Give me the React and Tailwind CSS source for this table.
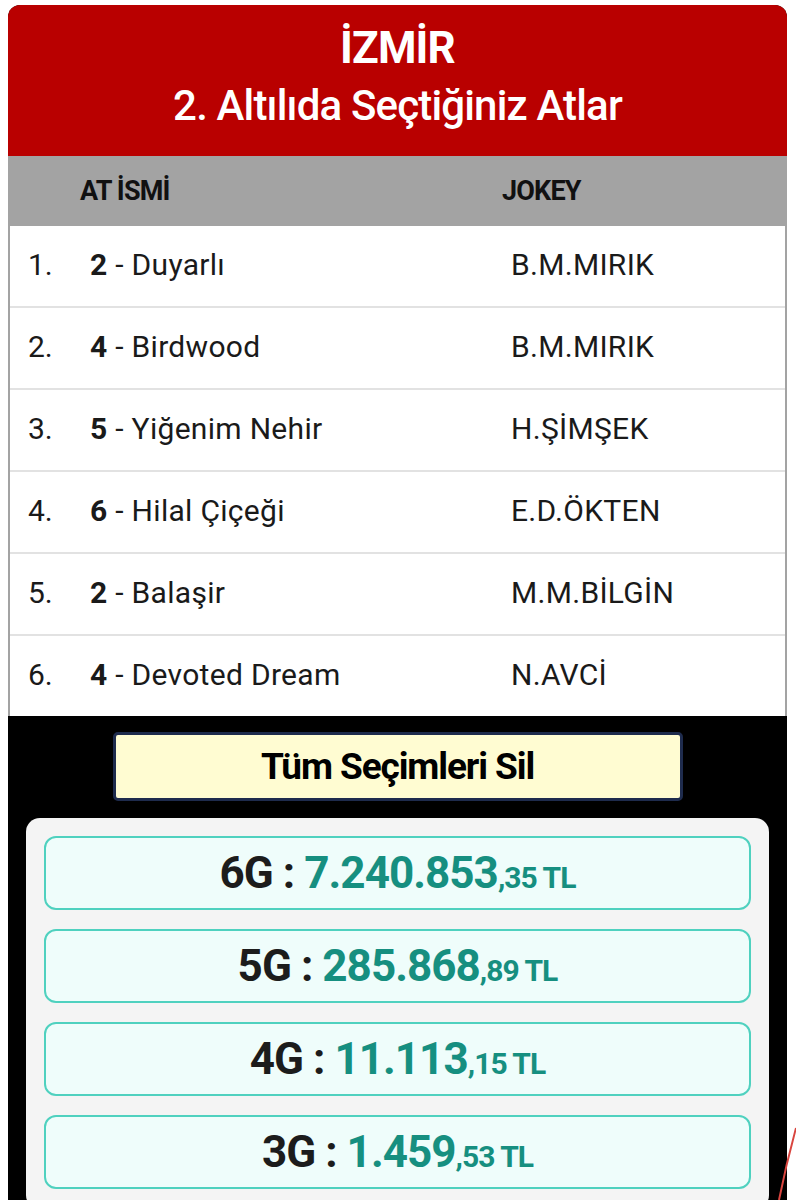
import React from "react";

const rows = [
  { n: "1.", num: "2", name: "Duyarlı", jockey: "B.M.MIRIK" },
  { n: "2.", num: "4", name: "Birdwood", jockey: "B.M.MIRIK" },
  { n: "3.", num: "5", name: "Yiğenim Nehir", jockey: "H.ŞİMŞEK" },
  { n: "4.", num: "6", name: "Hilal Çiçeği", jockey: "E.D.ÖKTEN" },
  { n: "5.", num: "2", name: "Balaşir", jockey: "M.M.BİLGİN" },
  { n: "6.", num: "4", name: "Devoted Dream", jockey: "N.AVCİ" },
];

const prizes = [
  { g: "6G", main: "7.240.853", dec: ",35 TL" },
  { g: "5G", main: "285.868", dec: ",89 TL" },
  { g: "4G", main: "11.113", dec: ",15 TL" },
  { g: "3G", main: "1.459", dec: ",53 TL" },
];

export default function App() {
  return (
    <div
      className="relative bg-white h-[1200px] overflow-hidden pl-2 pr-[9px] pt-[5px]"
      style={{ fontFamily: "Roboto, 'Noto Sans', sans-serif" }}
    >
      <div className="rounded-t-[12px] overflow-hidden bg-black h-[1300px]">
        {/* Red header */}
        <div className="h-[151px] bg-[#b90000] flex flex-col items-center pt-[18px] text-white">
          <div className="text-[44px] leading-[50px] font-bold tracking-[-0.02em]">İZMİR</div>
          <div className="mt-[8px] text-[42px] leading-[50px] font-medium tracking-[-0.02em]">
            2. Altılıda Seçtiğiniz Atlar
          </div>
        </div>

        {/* Table header */}
        <div className="h-[70px] bg-[#a3a3a3] flex items-center text-[27px] font-bold text-[#111] tracking-[-0.03em]">
          <div className="pl-[72px] w-[494px]">AT İSMİ</div>
          <div>JOKEY</div>
        </div>

        {/* Rows */}
        <div className="bg-white border-l-2 border-r-2 border-[#a3a3a3]">
          {rows.map((r, i) => (
            <div
              key={i}
              className={`flex items-center pb-[3px] text-[30px] text-[#1a1a1a] ${
                i < rows.length - 1 ? "h-[82px] border-b-2 border-[#e2e2e2]" : "h-[80px]"
              }`}
            >
              <div className="pl-[18px] w-[80px]">{r.n}</div>
              <div className="w-[421px] tracking-[0.01em]">
                <span className="font-bold">{r.num}</span> - {r.name}
              </div>
              <div className="tracking-[0.01em]">{r.jockey}</div>
            </div>
          ))}
        </div>

        {/* Black area */}
        <div className="bg-black pt-[16px] flex flex-col items-center">
          <button className="w-[570px] h-[69px] bg-[#fffcd2] border-[3px] border-[#1e2b4d] rounded-[5px] text-[37px] font-bold text-black tracking-[-0.03em] flex items-center justify-center">
            Tüm Seçimleri Sil
          </button>
        </div>
        <div className="mx-[18px] mt-[17px] bg-[#f4f4f4] rounded-[14px] px-[18px] pt-[18px] pb-[20px] flex flex-col gap-[19px]">
          {prizes.map((p, i) => (
            <div
              key={i}
              className="h-[74px] rounded-[12px] border-2 border-[#4fd1bf] bg-[#effdfb] flex items-center justify-center"
            >
              <div className="font-bold tracking-[-0.06em] leading-none">
                <span className="text-[44px] text-[#1c1c1c]">{p.g} : </span>
                <span className="text-[44px] text-[#168f80]">{p.main}</span>
                <span className="text-[30px] text-[#168f80]">{p.dec}</span>
              </div>
            </div>
          ))}
        </div>
      </div>

      {/* annotation stroke */}
      <svg className="absolute right-0 bottom-0" width="20" height="80" viewBox="0 0 20 80">
        <path d="M20 8 C 14 30, 8 55, 3 80" stroke="#d9453f" strokeWidth="2" fill="none" />
      </svg>
    </div>
  );
}
